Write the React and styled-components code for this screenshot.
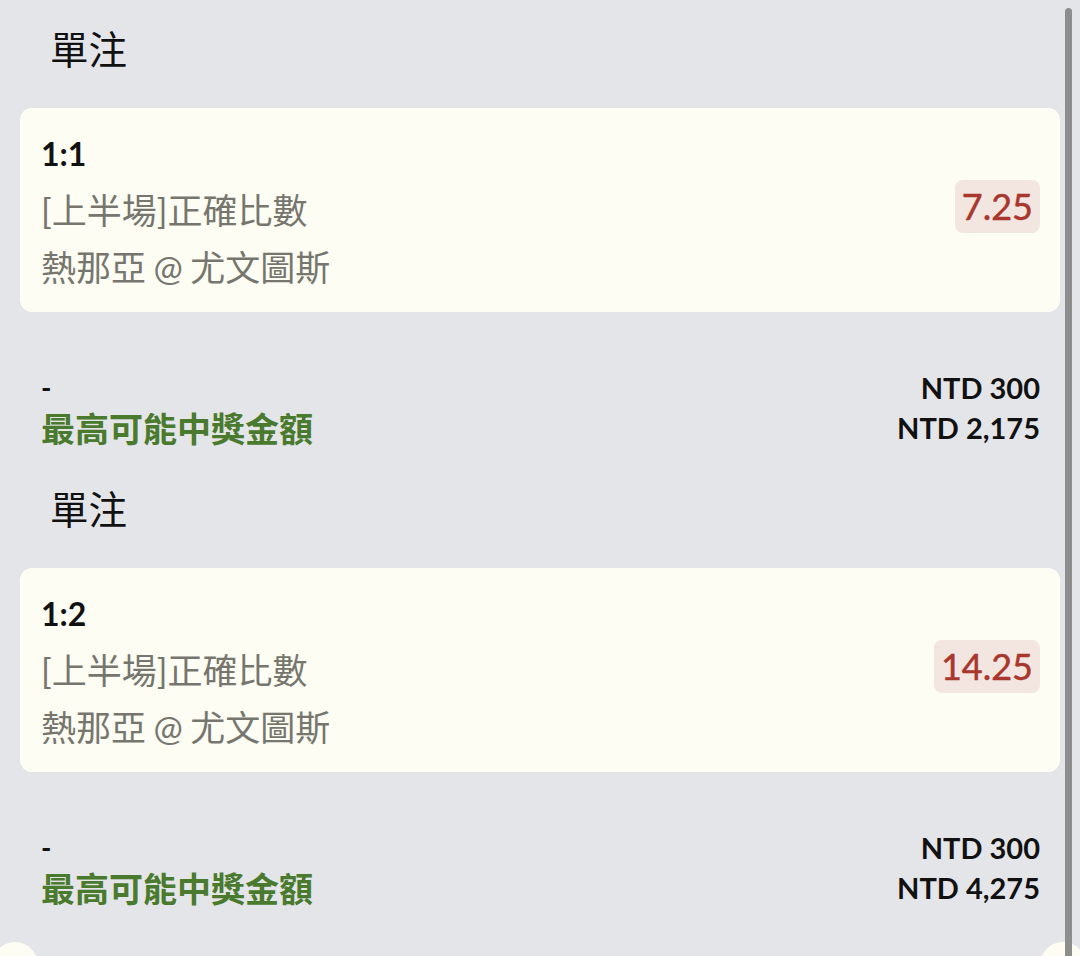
import React from "react";
import styled, { createGlobalStyle } from "styled-components";

const Global = createGlobalStyle`
  html, body { margin: 0; padding: 0; background: #e4e5e9; }
  body { font-family: Lato, "Noto Sans CJK TC", sans-serif; color: #111; }
`;

const Page = styled.div`
  position: relative;
  width: 1080px;
  height: 956px;
  overflow: hidden;
  background: #e4e5e9;
`;

const Section = styled.section`
  padding: 0 20px 13px;
`;

const Header = styled.h2`
  margin: 0;
  padding: 19px 0 0 30px;
  font-size: 38.5px;
  line-height: 60px;
  font-weight: 400;
  color: #111;
`;

const Card = styled.div`
  margin-top: 29px;
  height: 204px;
  box-sizing: border-box;
  background: #fdfdf4;
  border-radius: 12px;
  padding: 0 20px 0 21px;
  display: flex;
  align-items: center;
  justify-content: space-between;
`;

const Info = styled.div`
  display: flex;
  flex-direction: column;
`;

const Score = styled.div`
  font-size: 32px;
  font-weight: 700;
  line-height: 57px;
  color: #111;
`;

const Detail = styled.div`
  font-size: 35px;
  line-height: 57px;
  word-spacing: -1.5px;
  color: #76766e;
`;

const Odds = styled.div`
  background: #f3e5e0;
  color: #a8372e;
  font-size: 36px;
  line-height: 53px;
  padding: 0 7px;
  border-radius: 8px;
  margin-top: -8px;
  -webkit-text-stroke: 0.5px #a8372e;
`;

const Summary = styled.div`
  padding: 55px 20px 0 21px;
  display: grid;
  grid-template-columns: 1fr auto;
  grid-auto-rows: 40px;
  align-items: center;
`;

const Dash = styled.div`
  font-size: 28px;
  font-weight: 700;
  color: #111;
`;

const Amount = styled.div`
  font-size: 29px;
  font-weight: 700;
  color: #111;
  text-align: right;
`;

const Label = styled.div`
  font-size: 34px;
  font-weight: 700;
  color: #4a7a2e;
`;

const Scrollbar = styled.div`
  position: absolute;
  top: 8px;
  bottom: 0;
  left: 1065px;
  width: 7px;
  border-radius: 4px 4px 0 0;
  background: #8d8d8d;
  z-index: 2;
`;

const Bubble = styled.div`
  position: absolute;
  width: 46px;
  height: 46px;
  border-radius: 50%;
  background: #fdfdf4;
  top: 942px;
  left: ${(p) => p.$left}px;
  z-index: 1;
`;

const bets = [
  { score: "1:1", odds: "7.25", win: "NTD 2,175" },
  { score: "1:2", odds: "14.25", win: "NTD 4,275" },
];

export default function App() {
  return (
    <Page>
      <Global />
      {bets.map((b) => (
        <Section key={b.score}>
          <Header>單注</Header>
          <Card>
            <Info>
              <Score>{b.score}</Score>
              <Detail>[上半場]正確比數</Detail>
              <Detail>熱那亞 @ 尤文圖斯</Detail>
            </Info>
            <Odds>{b.odds}</Odds>
          </Card>
          <Summary>
            <Dash>-</Dash>
            <Amount>NTD 300</Amount>
            <Label>最高可能中獎金額</Label>
            <Amount>{b.win}</Amount>
          </Summary>
        </Section>
      ))}
      <Bubble $left={-8} />
      <Bubble $left={1040} />
      <Scrollbar />
    </Page>
  );
}
